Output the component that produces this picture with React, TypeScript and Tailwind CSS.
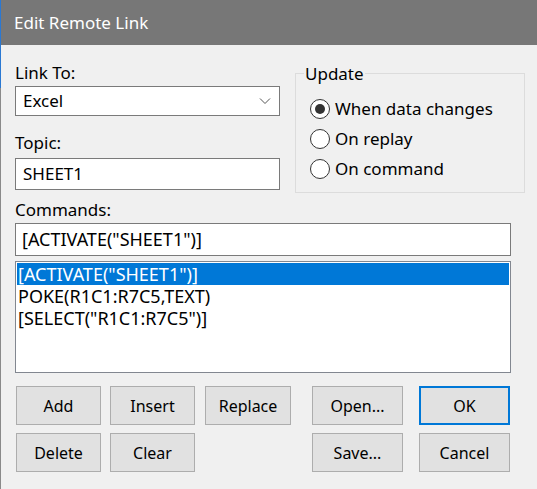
import React from "react";

const font = { fontFamily: '"Noto Sans", "Open Sans", sans-serif' };

function Button({ label, width = "w-[85px]", primary = false }: { label: string; width?: string; primary?: boolean }) {
  const border = primary ? "border-2 border-[#0078d7]" : "border border-[#adadad]";
  return (
    <div className={`${width} h-[39px] ${border} bg-[#e1e1e1] flex items-center justify-center text-[16px] text-black`}>
      {label}
    </div>
  );
}

function Radio({ label, checked = false }: { label: string; checked?: boolean }) {
  return (
    <div className="flex h-[30px] items-center">
      <div className="flex h-[20px] w-[20px] items-center justify-center rounded-full border border-[#333333] bg-white">
        {checked && <div className="h-[10px] w-[10px] rounded-full bg-[#333333]" />}
      </div>
      <span className="ml-[5px] text-[17px] text-black">{label}</span>
    </div>
  );
}

export default function App() {
  const rows = ['[ACTIVATE("SHEET1")]', "POKE(R1C1:R7C5,TEXT)", '[SELECT("R1C1:R7C5")]'];

  return (
    <div className="flex h-[489px] w-[537px] overflow-hidden bg-[#f0f0f0]" style={font}>
      {/* left window edge */}
      <div className="flex w-px flex-col">
        <div className="h-[88px] bg-[#2a78d2]" />
        <div className="flex-1 bg-[#8a8a8a]" />
      </div>

      <div className="flex flex-1 flex-col">
        {/* title bar */}
        <div className="flex h-[45px] items-center bg-[#777777] pl-[13px] text-[17px] text-white">
          Edit Remote Link
        </div>

        <div className="flex flex-col pl-[14px] pt-[17px]">
          {/* top section */}
          <div className="flex items-start">
            <div className="flex w-[265px] flex-col">
              <div className="h-[22px] text-[17px] leading-[22px] text-black">Link To:</div>
              <div className="mt-[2px] flex h-[30px] items-center justify-between border border-[#7a7a7a] bg-white pl-[7px] pr-[8px] text-[17px] text-black">
                <span>Excel</span>
                <svg width="12" height="8" viewBox="0 0 12 8" fill="none" stroke="#555" strokeWidth="1">
                  <path d="M1 1.5l5 5 5-5" />
                </svg>
              </div>
              <div className="mt-[16px] h-[22px] text-[17px] leading-[22px] text-black">Topic:</div>
              <div className="mt-[4px] flex h-[32px] items-center border border-[#7a7a7a] bg-white pl-[7px] text-[17px] text-black">
                SHEET1
              </div>
            </div>

            {/* Update group */}
            <div className="relative ml-[15px] mt-[11px] h-[120px] w-[230px] border border-[#dcdcdc] pl-[14px] pt-[20px]">
              <div className="absolute -top-[11px] left-[8px] bg-[#f0f0f0] px-[1px] text-[17px] leading-[22px] text-black">
                Update
              </div>
              <Radio label="When data changes" checked />
              <Radio label="On replay" />
              <Radio label="On command" />
            </div>
          </div>

          {/* commands */}
          <div className="mt-[6px] h-[22px] text-[17px] leading-[22px] text-black">Commands:</div>
          <div className="mt-[2px] flex h-[33px] w-[496px] items-center border border-[#7a7a7a] bg-white pl-[6px] text-[18px] text-black">
            [ACTIVATE("SHEET1")]
          </div>
          <div className="mt-[5px] flex h-[112px] w-[496px] flex-col border border-[#828790] bg-white p-[1px]">
            {rows.map((r, i) => (
              <div
                key={r}
                className={`flex h-[22px] items-center pl-[1px] text-[18px] ${i === 0 ? "bg-[#0078d7] text-white" : "text-black"}`}
              >
                {r}
              </div>
            ))}
          </div>

          {/* buttons */}
          <div className="ml-[1px] mt-[13px] flex flex-col gap-[8px]">
            <div className="flex">
              <Button label="Add" />
              <div className="ml-[9px]"><Button label="Insert" /></div>
              <div className="ml-[10px]"><Button label="Replace" width="w-[86px]" /></div>
              <div className="ml-[21px]"><Button label="Open..." width="w-[91px]" /></div>
              <div className="ml-[16px]"><Button label="OK" width="w-[91px]" primary /></div>
            </div>
            <div className="flex">
              <Button label="Delete" />
              <div className="ml-[9px]"><Button label="Clear" /></div>
              <div className="ml-[10px] w-[86px]" />
              <div className="ml-[21px]"><Button label="Save..." width="w-[91px]" /></div>
              <div className="ml-[16px]"><Button label="Cancel" width="w-[91px]" /></div>
            </div>
          </div>
        </div>
      </div>
    </div>
  );
}
